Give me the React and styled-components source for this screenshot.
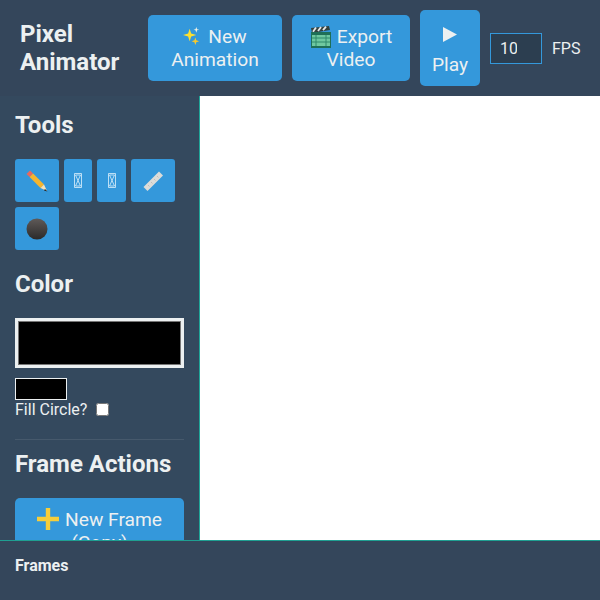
import React from "react";
import styled, { createGlobalStyle } from "styled-components";

const Global = createGlobalStyle`
  html, body { margin: 0; padding: 0; height: 100%; }
  body { font-family: Roboto, sans-serif; background: #34495e; color: #ecf0f1; }
  * { box-sizing: border-box; }
`;

const Page = styled.div`
  width: 600px;
  height: 600px;
  display: flex;
  flex-direction: column;
  overflow: hidden;
  background: #34495e;
`;

const Header = styled.header`
  height: 96px;
  flex: none;
  display: flex;
  align-items: center;
  gap: 10px;
  padding: 0 20px;
  background: #34465b;
`;

const Title = styled.h1`
  width: 118px;
  flex: none;
  margin: 0;
  font-size: 24px;
  line-height: 28px;
  font-weight: 700;
  color: #ecf0f1;
`;

const Button = styled.button`
  flex: none;
  width: ${(p) => p.$w}px;
  height: 66px;
  padding: 0 8px;
  border: none;
  border-radius: 5px;
  background: #3498db;
  color: #ecf0f1;
  font-family: inherit;
  font-size: 19.2px;
  line-height: 23px;
  text-align: center;
`;

const PlayButton = styled(Button)`
  height: 76px;
  padding-top: 7px;
`;

const InlineIcon = styled.svg`
  display: inline-block;
  width: ${(p) => p.$s}px;
  height: ${(p) => p.$s}px;
  margin: -5px ${(p) => p.$mr || 4}px -5px 0;
  vertical-align: ${(p) => p.$va}px;
`;

const PlayIcon = styled.svg`
  display: block;
  width: 14px;
  height: 15px;
  margin: 0 auto 11px;
`;

const FpsInput = styled.input`
  width: 52px;
  height: 31px;
  flex: none;
  padding: 0 9px;
  border: 1px solid #3498db;
  background: #2c3e50;
  color: #ecf0f1;
  font-family: inherit;
  font-size: 16px;
  outline: none;
`;

const FpsLabel = styled.span`
  font-size: 16px;
`;

const Main = styled.div`
  flex: 1;
  min-height: 0;
  display: flex;
`;

const Sidebar = styled.aside`
  width: 199px;
  flex: none;
  padding: 15px 15px 0;
  overflow: hidden;
`;

const Heading = styled.h2`
  margin: 0 0 20px;
  font-size: 24px;
  line-height: 28px;
  font-weight: 700;
  color: #ecf0f1;
`;

const Tools = styled.div`
  display: flex;
  flex-wrap: wrap;
  gap: 5px;
  margin-bottom: 20px;
`;

const ToolButton = styled.button`
  width: ${(p) => p.$w}px;
  height: 43px;
  padding: 0;
  display: flex;
  align-items: center;
  justify-content: center;
  border: none;
  border-radius: 3px;
  background: #3498db;
`;

const ToolIcon = styled.svg`
  display: block;
  width: ${(p) => p.$w || 24}px;
  height: ${(p) => p.$h || 24}px;
`;

const ColorWell = styled.input`
  display: block;
  width: 169px;
  height: 50px;
  padding: 0;
  border: 3px solid #ecf0f1;
  background: #000;
  appearance: none;
  &::-webkit-color-swatch-wrapper { padding: 0; }
  &::-webkit-color-swatch { border: 1px solid #767676; }
`;

const SmallWell = styled.input`
  display: block;
  width: 52px;
  height: 22px;
  margin-top: 10px;
  padding: 0;
  border: 1px solid #ecf0f1;
  background: #000;
  appearance: none;
  &::-webkit-color-swatch-wrapper { padding: 0; }
  &::-webkit-color-swatch { border: none; }
`;

const FillRow = styled.label`
  display: flex;
  align-items: center;
  height: 19px;
  font-size: 16px;
`;

const Check = styled.input`
  width: 13px;
  height: 13px;
  margin: 0 0 0 9px;
`;

const Divider = styled.hr`
  height: 1px;
  margin: 20px 0 10px;
  border: none;
  background: #46596c;
`;

const ActionButton = styled.button`
  display: block;
  width: 169px;
  padding: 10px;
  border: none;
  border-radius: 5px;
  background: #3498db;
  color: #ecf0f1;
  font-family: inherit;
  font-size: 19.2px;
  line-height: 23px;
`;

const Stage = styled.main`
  flex: 1;
  background: #fff;
  border-left: 1px solid #1fa598;
`;

const Footer = styled.footer`
  height: 60px;
  flex: none;
  padding: 15px;
  border-top: 1px solid #1f9f92;
  background: #34465b;
  font-size: 16px;
  line-height: 19px;
  font-weight: 700;
  color: #ecf0f1;
`;

const Sparkles = () => (
  <InlineIcon viewBox="0 0 20 20" $s={19} $mr={6} $va={3}>
    <path d="M7 3 L8.6 8 L14 9.5 L8.6 11 L7 16 L5.4 11 L0 9.5 L5.4 8Z" fill="#fde030" />
    <path d="M14 1 L14.8 3.4 L17 4 L14.8 4.6 L14 7 L13.2 4.6 L11 4 L13.2 3.4Z" fill="#f4f4e4" />
    <path d="M13 12 L14 15 L17 16 L14 17 L13 20 L12 17 L9 16 L12 15Z" fill="#f7c92e" />
  </InlineIcon>
);

const Clapper = () => (
  <InlineIcon viewBox="0 0 22 22" $s={22} $mr={5} $va={0}>
    <path d="M1 2 L19 0 L20 4 L2 7Z" fill="#33413e" />
    <path d="M3 5.8 L6 1.4 M8 5 L11 1 M13 4.2 L16 .6" stroke="#e8e8e8" strokeWidth="1.8" />
    <rect x="1" y="6" width="20" height="16" fill="#1f6f57" />
    <rect x="2" y="9" width="18" height="11" fill="#6fc8a0" />
    <path d="M2 12 H20 M2 16 H20 M6 9 V20 M16 9 V20" stroke="#2f8a6b" strokeWidth="1" />
  </InlineIcon>
);

const Plus = () => (
  <InlineIcon viewBox="0 0 22 22" $s={22} $mr={6} $va={1}>
    <path d="M11 0 V22 M0 11 H22" stroke="#f6ce3a" strokeWidth="4.4" />
  </InlineIcon>
);

const Pencil = () => (
  <ToolIcon viewBox="0 0 24 24">
    <path d="M5 1.5 L1.5 5 L4.6 8.1 L8.1 4.6Z" fill="#e8685f" />
    <path d="M4.6 8.1 L8.1 4.6 L19 15.5 L15.5 19Z" fill="#f5b52e" />
    <path d="M15.5 19 L19 15.5 L22 22Z" fill="#f6e1b8" />
    <path d="M20 20 L22.5 22.5 L19 21.4Z" fill="#222" />
  </ToolIcon>
);

const Tofu = () => (
  <ToolIcon viewBox="0 0 8 15" $w={8} $h={15}>
    <path d="M.5.5 H7.5 V14.5 H.5Z M1.5 2 H6.5 L4 7.5Z M1.5 13 H6.5 L4 7.5Z" fill="none" stroke="#dff1fb" strokeWidth=".8" />
  </ToolIcon>
);

const Ruler = () => (
  <ToolIcon viewBox="0 0 24 24">
    <path d="M2.5 18 L18 2.5 L22 6.5 L6.5 22Z" fill="#dcdcd9" />
    <path d="M7 16 L8.5 17.5 M10 13 L11.5 14.5 M13 10 L14.5 11.5 M16 7 L17.5 8.5" stroke="#b8b8b4" strokeWidth=".8" />
  </ToolIcon>
);

const Ball = () => (
  <ToolIcon viewBox="0 0 22 22" $w={22} $h={22}>
    <defs>
      <linearGradient id="ball" x1="0" y1="0" x2="0" y2="1">
        <stop offset="0" stopColor="#5f5a58" />
        <stop offset="1" stopColor="#2b2a2a" />
      </linearGradient>
    </defs>
    <circle cx="11" cy="11" r="10.5" fill="url(#ball)" />
  </ToolIcon>
);

export default function App() {
  return (
    <Page>
      <Global />
      <Header>
        <Title>Pixel Animator</Title>
        <Button $w={134}><Sparkles />New Animation</Button>
        <Button $w={118}><Clapper />Export Video</Button>
        <PlayButton $w={60}>
          <PlayIcon viewBox="0 0 14 15"><path d="M0 0 L14 7.5 L0 15Z" fill="#ecf0f1" /></PlayIcon>
          Play
        </PlayButton>
        <FpsInput type="number" defaultValue={10} />
        <FpsLabel>FPS</FpsLabel>
      </Header>
      <Main>
        <Sidebar>
          <Heading>Tools</Heading>
          <Tools>
            <ToolButton $w={44}><Pencil /></ToolButton>
            <ToolButton $w={28}><Tofu /></ToolButton>
            <ToolButton $w={29}><Tofu /></ToolButton>
            <ToolButton $w={44}><Ruler /></ToolButton>
            <ToolButton $w={44}><Ball /></ToolButton>
          </Tools>
          <Heading>Color</Heading>
          <ColorWell type="color" defaultValue="#000000" />
          <SmallWell type="color" defaultValue="#000000" />
          <FillRow>
            Fill Circle?
            <Check type="checkbox" />
          </FillRow>
          <Divider />
          <Heading>Frame Actions</Heading>
          <ActionButton><Plus />New Frame (Copy)</ActionButton>
        </Sidebar>
        <Stage />
      </Main>
      <Footer>Frames</Footer>
    </Page>
  );
}
